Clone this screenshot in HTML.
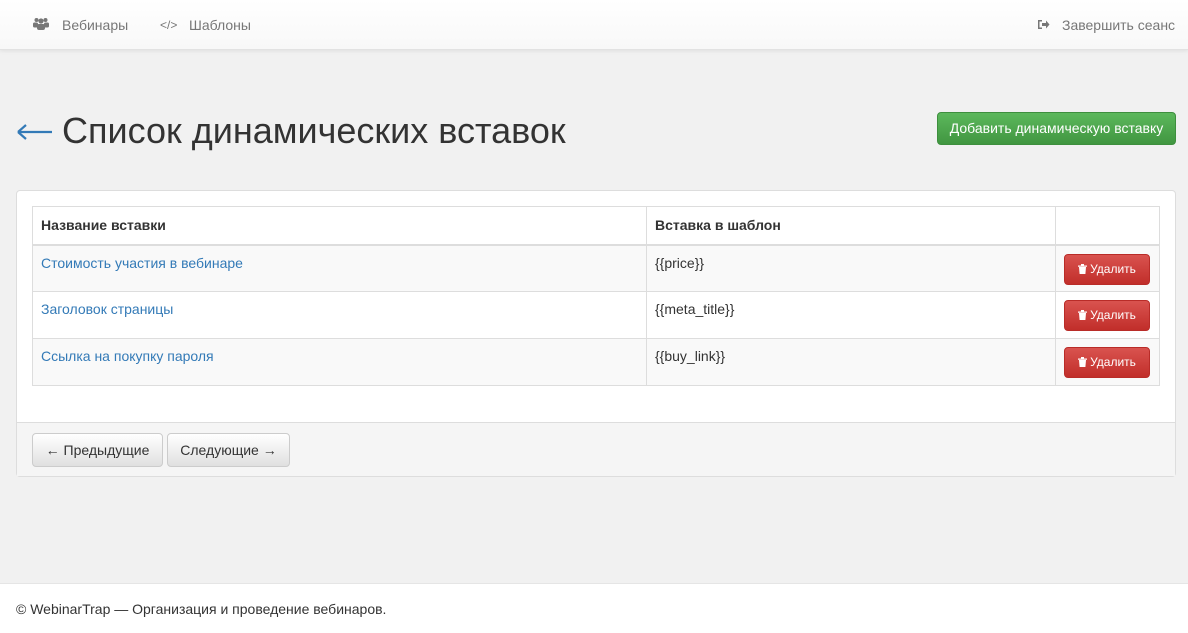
<!DOCTYPE html>
<html><head><meta charset="utf-8"><style>
*{box-sizing:border-box}
body{margin:0;width:1188px;height:633px;background:#f1f1f1;font-family:"Liberation Sans",Arial,sans-serif;font-size:14px;color:#333;position:relative;overflow:hidden}
.nav{position:absolute;left:0;top:0;width:1188px;height:50px;background:linear-gradient(#fff,#f8f8f8);border-bottom:1px solid #e2e2e2;box-shadow:0 1px 4px rgba(0,0,0,.08)}
.nav span{position:absolute;top:17px;color:#777;font-size:14px}
h1{position:absolute;left:62px;top:110px;margin:0;font-size:36px;font-weight:400;color:#333;line-height:42px}
.add{position:absolute;left:937px;top:112px;width:239px;height:33px;background:linear-gradient(#5cb85c,#419641);border:1px solid #3e8f3e;border-radius:4px;color:#fff;font-size:14px;text-align:center;line-height:31px}
.panel{position:absolute;left:16px;top:190px;width:1160px;height:287px;background:#fff;border:1px solid #ddd;border-radius:4px}
.pf{position:absolute;left:0;top:231px;width:1158px;height:54px;background:#f5f5f5;border-top:1px solid #ddd}
table{position:absolute;left:15px;top:15px;border-collapse:collapse;width:1128px}
td,th{border:1px solid #ddd;padding:7px 8px 0;text-align:left;vertical-align:top;height:47px;line-height:20px}
th{height:38px;padding:8px;border-bottom:2px solid #ddd;font-weight:bold}
tr.o td{background:#f9f9f9}
a{color:#337ab7;text-decoration:none}
.del{display:inline-block;margin-top:1px;width:86px;height:31px;background:linear-gradient(#d9534f,#c12e2a);border:1px solid #b92c28;border-radius:4px;color:#fff;font-size:12px;line-height:29px;text-align:center}
.del svg{vertical-align:-1px;margin-right:3px}
.btn{position:absolute;top:10px;height:34px;background:linear-gradient(#fff,#e0e0e0);border:1px solid #ccc;border-radius:4px;line-height:32px;text-align:center;color:#333}
.foot{position:absolute;left:0;top:583px;width:1188px;height:50px;background:#fff;border-top:1px solid #e5e5e5;padding:17px 16px;font-size:14px}
</style></head><body>
<div class="nav">
<svg style="position:absolute;left:33px;top:17px" width="16" height="14" viewBox="0 0 16 14"><g fill="#777"><circle cx="8" cy="4" r="2.6"/><circle cx="3.5" cy="3" r="2"/><circle cx="12.5" cy="3" r="2"/><rect x="4" y="7" width="8" height="6" rx="2"/><rect x="0" y="5.5" width="5" height="5" rx="1.5"/><rect x="11" y="5.5" width="5" height="5" rx="1.5"/></g></svg>
<span style="left:62px">Вебинары</span>
<span style="left:160px;font-size:12px;top:18px">&lt;/&gt;</span>
<span style="left:189px">Шаблоны</span>
<svg style="position:absolute;left:1037px;top:19px" width="13" height="11" viewBox="0 0 13 11"><path d="M1 1h4v1.5H2.5v6H5V10H1z M5 4h4V1.5L12.5 5.5 9 9.5V7H5z" fill="#777"/></svg>
<span style="left:1062px">Завершить сеанс</span>
</div>
<svg style="position:absolute;left:16px;top:122px" width="37" height="20" viewBox="0 0 37 20"><path d="M2 10H36M2 10L10 3M2 10L10 17" stroke="#337ab7" stroke-width="2.2" fill="none"/></svg>
<h1>Список динамических вставок</h1>
<div class="add">Добавить динамическую вставку</div>
<div class="panel">
<table>
<tr><th style="width:614px">Название вставки</th><th style="width:409px">Вставка в шаблон</th><th></th></tr>
<tr class="o"><td><a>Стоимость участия в вебинаре</a></td><td>{{price}}</td><td><span class="del"><svg width="9" height="10" viewBox="0 0 9 10"><path d="M0 1.5h9v1.2H0zM3 0h3v1.5H3zM1 3h7l-.6 7H1.6z" fill="#fff"/></svg>Удалить</span></td></tr>
<tr><td><a>Заголовок страницы</a></td><td>{{meta_title}}</td><td><span class="del"><svg width="9" height="10" viewBox="0 0 9 10"><path d="M0 1.5h9v1.2H0zM3 0h3v1.5H3zM1 3h7l-.6 7H1.6z" fill="#fff"/></svg>Удалить</span></td></tr>
<tr class="o"><td><a>Ссылка на покупку пароля</a></td><td>{{buy_link}}</td><td><span class="del"><svg width="9" height="10" viewBox="0 0 9 10"><path d="M0 1.5h9v1.2H0zM3 0h3v1.5H3zM1 3h7l-.6 7H1.6z" fill="#fff"/></svg>Удалить</span></td></tr>
</table>
<div class="pf">
<div class="btn" style="left:15px;width:131px">← Предыдущие</div>
<div class="btn" style="left:150px;width:123px">Следующие →</div>
</div>
</div>
<div class="foot">© WebinarTrap — Организация и проведение вебинаров.</div>
</body></html>
